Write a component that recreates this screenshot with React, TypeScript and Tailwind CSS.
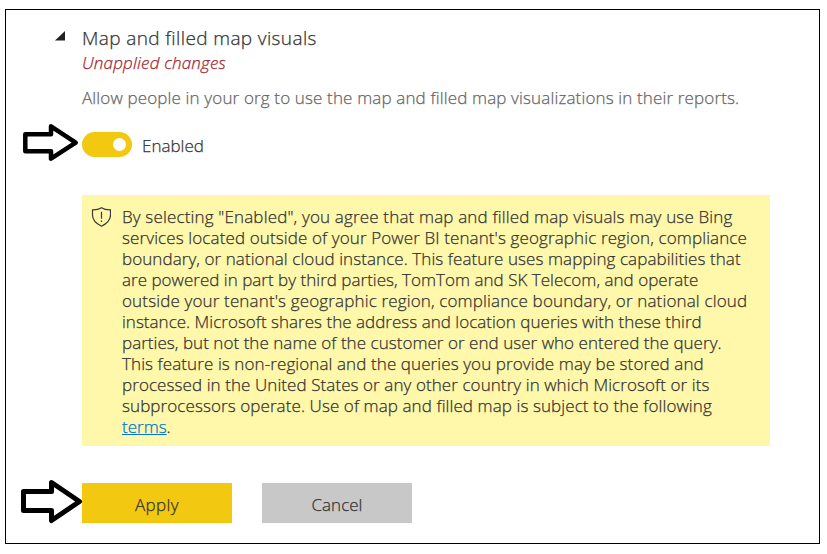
const lines: { text: string; spacing: string }[] = [
  { text: 'By selecting "Enabled", you agree that map and filled map visuals may use Bing', spacing: 'tracking-[0.16px]' },
  { text: "services located outside of your Power BI tenant's geographic region, compliance", spacing: 'tracking-[0.115px]' },
  { text: 'boundary, or national cloud instance. This feature uses mapping capabilities that', spacing: 'tracking-[0.075px]' },
  { text: 'are powered in part by third parties, TomTom and SK Telecom, and operate', spacing: 'tracking-[0.02px]' },
  { text: "outside your tenant's geographic region, compliance boundary, or national cloud", spacing: 'tracking-[0.145px]' },
  { text: 'instance. Microsoft shares the address and location queries with these third', spacing: 'tracking-[0.02px]' },
  { text: 'parties, but not the name of the customer or end user who entered the query.', spacing: 'tracking-[0.04px]' },
  { text: 'This feature is non-regional and the queries you provide may be stored and', spacing: 'tracking-[0.095px]' },
  { text: 'processed in the United States or any other country in which Microsoft or its', spacing: 'tracking-[0.08px]' },
  { text: 'subprocessors operate. Use of map and filled map is subject to the following', spacing: 'tracking-[0.09px]' },
];

function ShieldIcon() {
  return (
    <svg className="block h-[21px] w-5 shrink-0" viewBox="0 0 20 21" fill="none" stroke="#3a3a38" strokeWidth="1.2">
      <path d="M10.500 1.700C8.100 3.300 4.700 4 1.500 3.900V9C1.500 14 5.100 17.600 10.500 20.200C15.900 17.600 19.500 14 19.500 9V3.900C16.300 4 12.900 3.300 10.500 1.700Z" />
      <path d="M10.500 5.700V12.700M10.500 14.400V16" />
    </svg>
  );
}

function PointerArrow({ d, width }: { d: string; width: number }) {
  return <path d={d} fill="#fff" stroke="#000" strokeWidth={width} strokeLinejoin="round" />;
}

export default function App() {
  return (
    <div className="relative h-[554px] w-[827px] overflow-hidden bg-white pl-[5px] pt-[9px] font-['Open_Sans','Noto_Sans',sans-serif] text-[17px] font-light text-[#333] [-webkit-text-stroke-width:0.25px]">
      <main className="h-[535px] w-[815px] border border-black pl-[49px] pt-[16px]">
        <header className="flex">
          <svg className="mt-[5px] block h-[10px] w-[10px]" viewBox="0 0 10 10">
            <path d="M10 0V9.500H0Z" fill="#222" />
          </svg>
          <div className="ml-[17px]">
            <h1 className="h-[25px] whitespace-nowrap text-[19px] font-light leading-[24px] tracking-[0.38px]">Map and filled map visuals</h1>
            <p className="h-6 whitespace-nowrap italic leading-6 tracking-[0.18px] text-[#a4262c]">Unapplied changes</p>
          </div>
        </header>
        <div className="ml-[27px]">
          <p className="mt-[11px] h-6 whitespace-nowrap leading-6 tracking-[0.145px] text-[#666]">
            Allow people in your org to use the map and filled map visualizations in their reports.
          </p>
          <div className="mt-[22px] flex h-[25px] items-center gap-[10px]">
            <button role="switch" aria-checked="true" className="flex h-[25px] w-[50px] items-center justify-end rounded-full bg-[#f2c811] pr-[6px]">
              <span className="h-[13px] w-[13px] rounded-full bg-white" />
            </button>
            <span className="pt-0.5">Enabled</span>
          </div>
          <section className="mt-[38px] flex h-[251px] w-[688px] bg-[#fff8ab] pl-[9px] pt-[11px]">
            <ShieldIcon />
            <div className="ml-[11px] whitespace-nowrap leading-[21px]">
              {lines.map((line) => (
                <p key={line.text} className={line.spacing}>{line.text}</p>
              ))}
              <p><a className="text-[#0078d4] underline">terms</a>.</p>
            </div>
          </section>
          <div className="mt-[37px] flex gap-[30px]">
            <button className="h-10 w-[150px] bg-[#f2c811] pt-1 tracking-[0.4px]">Apply</button>
            <button className="h-10 w-[150px] bg-[#c8c8c8] pt-1">Cancel</button>
          </div>
        </div>
      </main>
      <svg className="pointer-events-none absolute left-0 top-0 h-[554px] w-[84px]" viewBox="0 0 84 554">
        <PointerArrow width={4.500} d="M25.300 134.300H51V126.300L75.700 142.700L51 158.700V151.300H25.300Z" />
        <PointerArrow width={5} d="M23.500 491.500H51.500V482.500L79.500 501.500L51.500 520.500V510.500H23.500Z" />
      </svg>
    </div>
  );
}
